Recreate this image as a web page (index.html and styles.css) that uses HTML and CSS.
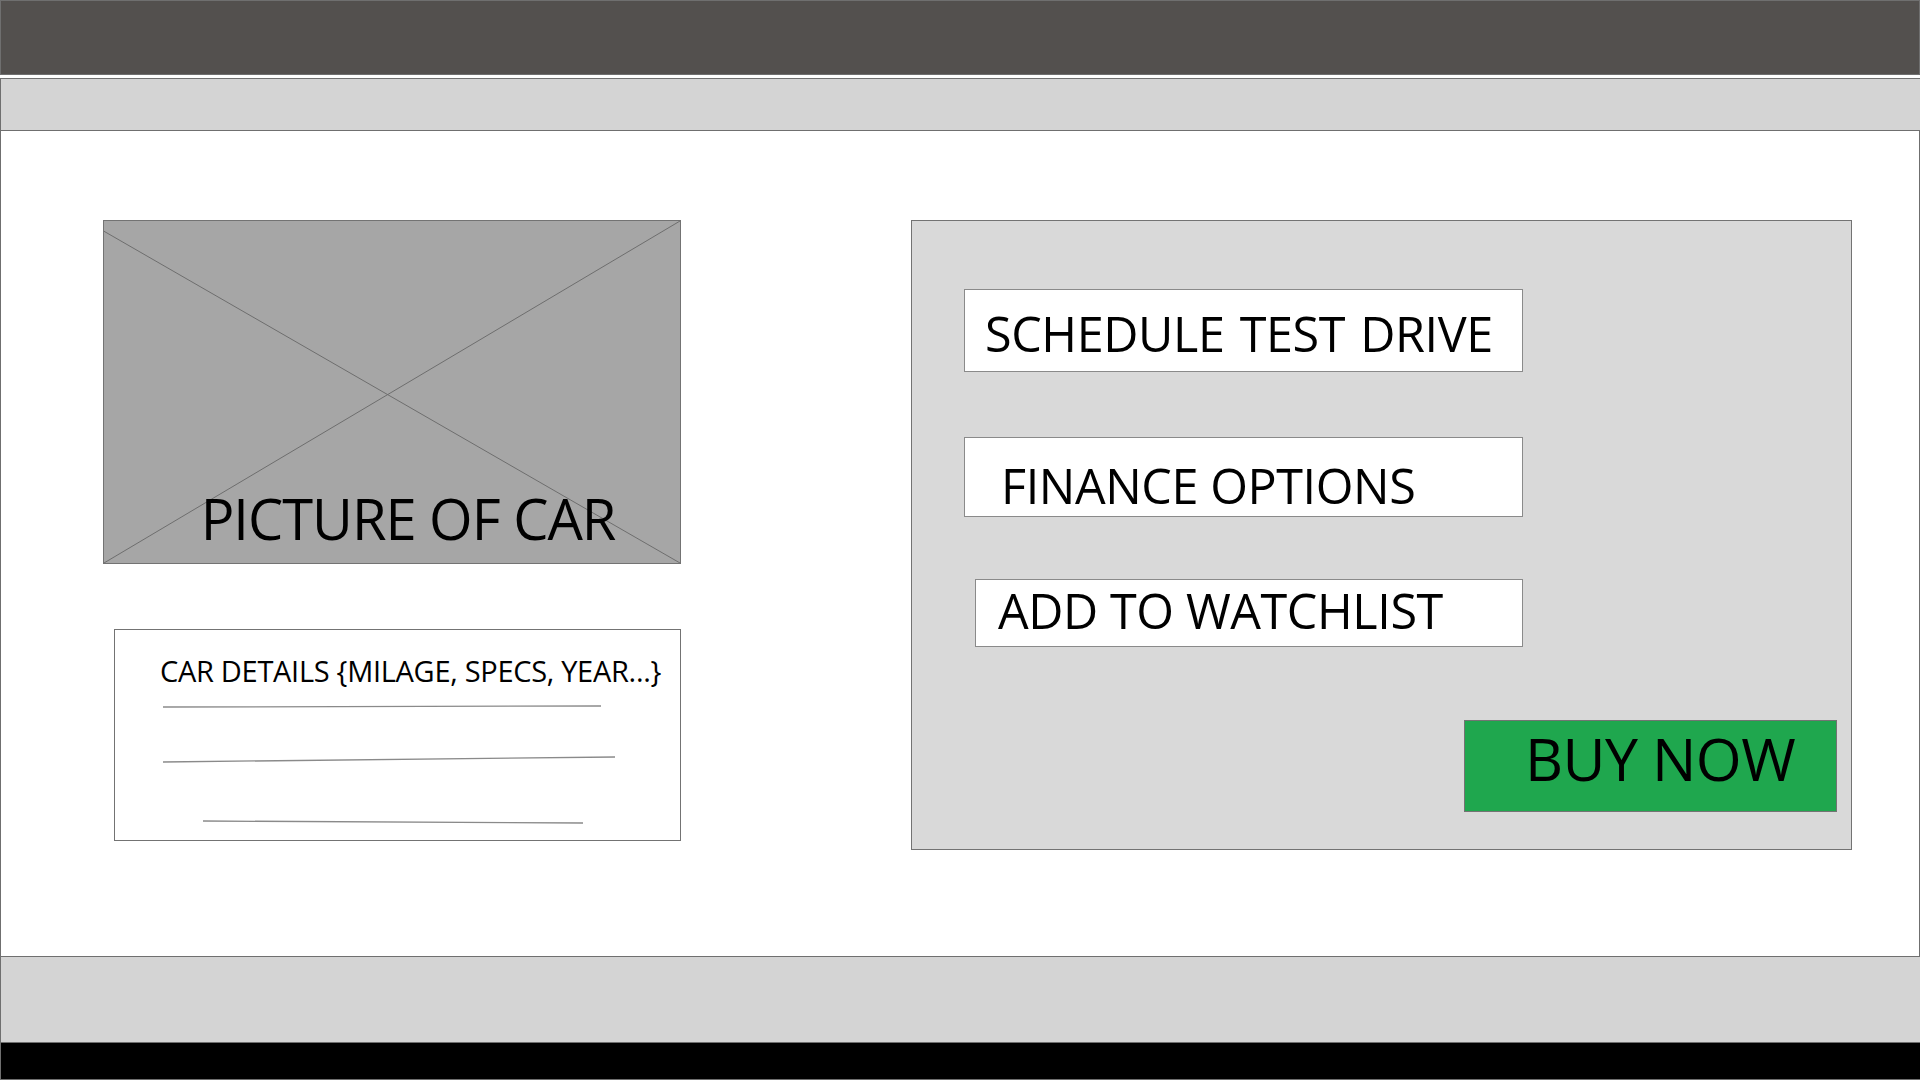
FILE: index.html
```html
<!DOCTYPE html>
<html>
<head>
<meta charset="utf-8">
<link rel="stylesheet" href="styles.css">
</head>
<body>
<div class="topbar"></div>
<div class="navbar"></div>
<main class="main">
  <section class="leftcol">
    <div class="picture">
      <svg class="xlines" viewBox="0 0 100 100" preserveAspectRatio="none">
        <line x1="0" y1="3" x2="100" y2="100" vector-effect="non-scaling-stroke"/>
        <line x1="100" y1="0" x2="0" y2="100" vector-effect="non-scaling-stroke"/>
      </svg>
      <span class="picture-label">PICTURE OF CAR</span>
    </div>
    <div class="details">
      <div class="details-title">CAR DETAILS {MILAGE, SPECS, YEAR...}</div>
      <svg class="details-lines" width="565" height="150" viewBox="0 0 565 150">
        <line x1="48" y1="22" x2="486" y2="21"/>
        <line x1="48" y1="77" x2="500" y2="72"/>
        <line x1="88" y1="136" x2="468" y2="138"/>
      </svg>
    </div>
  </section>
  <section class="panel">
    <div class="action action-schedule">SCHEDULE TEST DRIVE</div>
    <div class="action action-finance">FINANCE OPTIONS</div>
    <div class="action action-watch">ADD TO WATCHLIST</div>
    <div class="buy">BUY NOW</div>
  </section>
</main>
<div class="footer"></div>
<div class="bottombar"></div>
</body>
</html>
```
FILE: styles.css
```css
html, body {
  margin: 0;
  padding: 0;
  background: #ffffff;
}
body {
  width: 1920px;
  height: 1080px;
  overflow: hidden;
  font-family: "Open Sans", "Noto Sans", sans-serif;
  color: #000;
}
.topbar {
  box-sizing: border-box;
  height: 75px;
  background: #53504e;
  border: 1px solid #6f6f6f;
}
.navbar {
  box-sizing: border-box;
  margin-top: 3px;
  height: 53px;
  background: #d4d4d4;
  border-top: 1px solid #6f6f6f;
  border-bottom: 1px solid #6f6f6f;
  border-left: 1px solid #6f6f6f;
}
.main {
  box-sizing: border-box;
  height: 825px;
  border-left: 1px solid #6f6f6f;
  border-right: 1px solid #6f6f6f;
  display: flex;
  align-items: flex-start;
  padding: 89px 0 0 102px;
}
.leftcol {
  width: 578px;
  display: flex;
  flex-direction: column;
}
.picture {
  position: relative;
  box-sizing: border-box;
  height: 344px;
  background: #a6a6a6;
  border: 1px solid #737373;
  display: flex;
  align-items: flex-end;
  justify-content: center;
}
.xlines {
  position: absolute;
  inset: 0;
  width: 100%;
  height: 100%;
}
.xlines line {
  stroke: #6e6e6e;
  stroke-width: 1;
}
.picture-label {
  position: relative;
  font-size: 56px;
  line-height: 1;
  margin: 0 0 17px 32px;
  letter-spacing: -1px;
}
.details {
  box-sizing: border-box;
  margin: 65px 0 0 11px;
  height: 212px;
  border: 1px solid #737373;
  background: #fff;
}
.details-title {
  font-size: 29px;
  line-height: 1;
  margin: 26px 0 0 45px;
  letter-spacing: -0.3px;
}
.details-lines {
  display: block;
}
.details-lines line {
  stroke: #8a8a8a;
  stroke-width: 1.3;
}
.panel {
  box-sizing: border-box;
  margin-left: 230px;
  width: 941px;
  height: 630px;
  background: #d9d9d9;
  border: 1px solid #737373;
  display: flex;
  flex-direction: column;
  align-items: flex-start;
  padding: 68px 0 0 52px;
}
.action {
  box-sizing: border-box;
  background: #fff;
  border: 1px solid #8a8a8a;
  width: 559px;
  font-size: 48.5px;
  line-height: 1;
  display: flex;
  align-items: center;
  letter-spacing: -0.4px;
}
.action-schedule {
  height: 83px;
  padding: 6px 0 0 20px;
  word-spacing: 3px;
}
.action-finance {
  margin-top: 65px;
  height: 80px;
  padding: 16px 0 0 36px;
}
.action-watch {
  margin-top: 62px;
  margin-left: 11px;
  width: 548px;
  height: 68px;
  padding: 0 0 6px 22px;
}
.buy {
  box-sizing: border-box;
  margin: 73px 0 0 500px;
  width: 373px;
  height: 92px;
  background: #1fa74e;
  border: 1px solid #737373;
  font-size: 59px;
  line-height: 1;
  display: flex;
  align-items: center;
  padding: 0 0 16px 60px;
  letter-spacing: -0.6px;
}
.footer {
  box-sizing: border-box;
  height: 87px;
  background: #d4d4d4;
  border-top: 1px solid #6f6f6f;
  border-bottom: 1px solid #6f6f6f;
  border-left: 1px solid #6f6f6f;
}
.bottombar {
  box-sizing: border-box;
  height: 37px;
  background: #000;
  border-bottom: 1px solid #6f6f6f;
  border-left: 1px solid #6f6f6f;
}
```
